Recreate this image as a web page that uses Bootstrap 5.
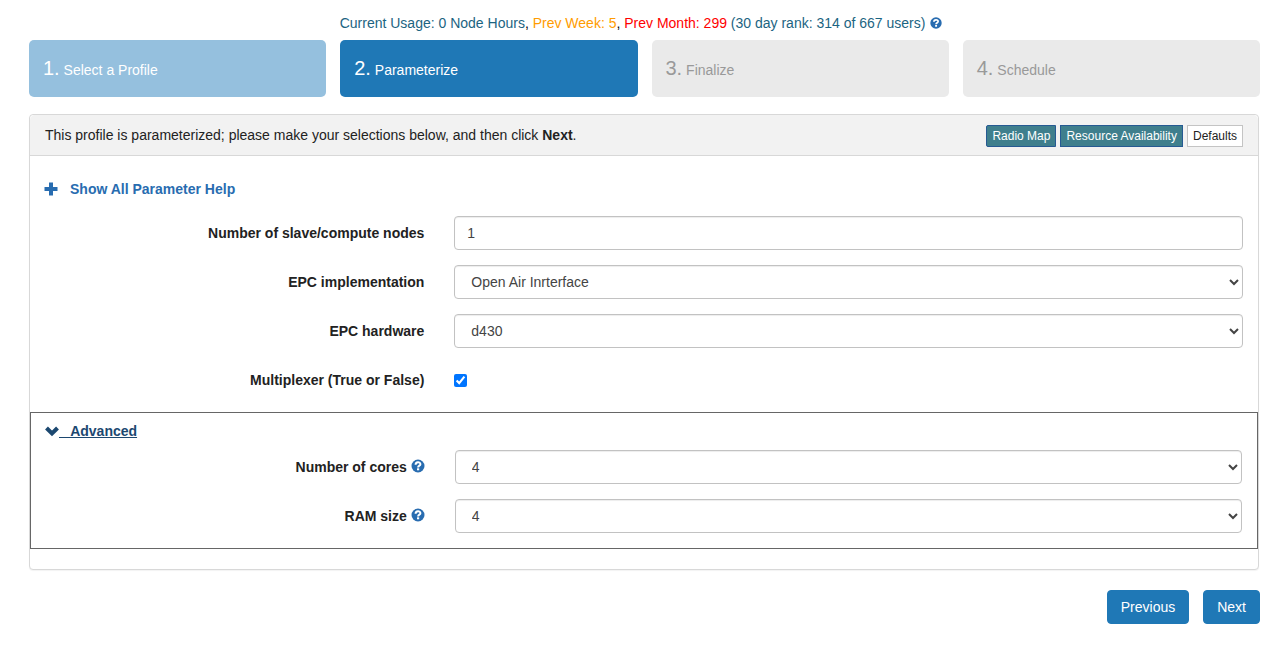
<!DOCTYPE html>
<html lang="en">
<head>
<meta charset="utf-8">
<meta name="viewport" content="width=device-width, initial-scale=1">
<title>Instantiate: Parameterize</title>
<link href="https://cdn.jsdelivr.net/npm/bootstrap@5.3.0/dist/css/bootstrap.min.css" rel="stylesheet">
<style>
  body {
    --bs-gutter-x: 30px;
    font-family: "Liberation Sans", Arial, sans-serif;
    font-size: 14px;
    line-height: 20px;
    color: #222;
    background: #fff;
  }
  a { color: #286cb0; text-decoration: none; }
  .page { padding: 13px 27px 24px 29px; }
  .usage { color: #1c6482; margin-bottom: 7px; padding-right: 6px; }
  .usage .week { color: #ff9c00; }
  .usage .month { color: #f00; }
  .glyph { width: 14px; height: 14px; fill: #286cb0; vertical-align: -2px; }
  .field label .glyph { vertical-align: -1px; }
  .hook { fill: none; stroke: #fff; stroke-width: 2; }
  .dot { fill: #fff; }

  .steps { gap: 14px; margin-bottom: 17px; }
  .step { padding: 15px 14px 12px; line-height: 30px; border-radius: 5px; background: #eaeaea; color: #999; }
  .step .num { font-size: 20px; line-height: 20px; }
  .step.done { background: #95c0de; color: #fff; }
  .step.current { background: #1f78b6; color: #fff; }

  .panel { margin: 0 1px 20px 0; border: 1px solid #d8d8d8; border-radius: 4px; box-shadow: 0 1px 1px rgba(0, 0, 0, .05); }
  .panel .card-header { padding: 10px 15px 8px; background: #f2f2f2; border-color: #d8d8d8; }
  .tools { gap: 4px; }
  .btn-tool { padding: 1px 5px; font-size: 12px; line-height: 18px; border-radius: 0; background: #fff; border-color: #c4c4c4; color: #222; }
  .btn-teal { background: #3f7f8d; border-color: #265a93; color: #fff; }
  .tools .btn-teal:first-child { border-radius: 2px 0 0 2px; }

  .help-link { margin: 23px 14px 17px; gap: 12px; }
  .field { --bs-gutter-x: 30px; margin: 0 0 15px; }
  .field label { line-height: 34px; }
  .form-control { height: 34px; padding: 6px 12px; font-size: 14px; line-height: 20px; color: #444; border-color: #c2c2c2; border-radius: 4px; box-shadow: inset 0 1px 1px rgba(0, 0, 0, .075); }
  select.form-control { appearance: auto; }
  .tick { width: 13px; height: 13px; margin: 0; accent-color: #0075ff; }

  .advanced { border: 1px solid #666; margin-bottom: 20px; padding-top: 8px; }
  .advanced-link { margin: 0 14px 9px; color: #1c4870; }
  .advanced-link .glyph { fill: none; stroke: #1c4870; stroke-width: 4; }
  .advanced-link .caption { text-decoration: underline; white-space: pre; }

  .actions { gap: 14px; }
  .btn-main { padding: 6px 13px; font-size: 14px; line-height: 20px; border-radius: 4px; background: #1f78b6; border-color: #1f78b6; color: #fff; }
</style>
</head>
<body>
<svg class="d-none" aria-hidden="true">
  <symbol id="question" viewBox="0 0 14 14">
    <circle cx="7" cy="7" r="6.5"/>
    <path class="hook" d="M4.600 5.700C4.600 2.600 9.400 2.600 9.400 5.200C9.400 6.800 7.100 6.500 7.100 8.500"/>
    <path class="dot" d="M6 9.300h2.200v2H6z"/>
  </symbol>
</svg>

<main class="page container-fluid">
  <div class="usage text-center">Current Usage: 0 Node Hours<span class="text-black">,</span> <span class="week">Prev Week: 5</span><span class="text-black">,</span> <span class="month">Prev Month: 299</span> (30 day rank: 314 of 667 users)
    <a href="#" aria-label="Usage help"><svg class="glyph" viewBox="-1 -1 16 16"><use href="#question" width="14" height="14"/></svg></a>
  </div>

  <div class="steps d-flex">
    <div class="step done flex-fill w-25"><span class="num">1.</span> Select a Profile</div>
    <div class="step current flex-fill w-25"><span class="num">2.</span> Parameterize</div>
    <div class="step flex-fill w-25"><span class="num">3.</span> Finalize</div>
    <div class="step flex-fill w-25"><span class="num">4.</span> Schedule</div>
  </div>

  <form>
    <section class="card panel">
      <div class="card-header d-flex justify-content-between">
        <span>This profile is parameterized; please make your selections below, and then click <b>Next</b>.</span>
        <div class="tools d-flex">
          <button type="button" class="btn btn-tool btn-teal">Radio Map</button>
          <button type="button" class="btn btn-tool btn-teal">Resource Availability</button>
          <button type="button" class="btn btn-tool">Defaults</button>
        </div>
      </div>

      <a href="#" class="help-link fw-bold d-flex align-items-center align-self-start">
        <svg class="glyph" viewBox="0 0 14 14"><path d="M5 .5h4V5h4.500v4H9v4.500H5V9H.5V5H5z"/></svg>
        <span>Show All Parameter Help</span>
      </a>

      <div class="row field">
        <label class="col-4 text-end fw-bold" for="nodes">Number of slave/compute nodes</label>
        <div class="col-8"><input id="nodes" type="text" class="form-control" value="1"></div>
      </div>
      <div class="row field">
        <label class="col-4 text-end fw-bold" for="epc">EPC implementation</label>
        <div class="col-8"><select id="epc" class="form-control"><option>Open Air Inrterface</option></select></div>
      </div>
      <div class="row field">
        <label class="col-4 text-end fw-bold" for="hardware">EPC hardware</label>
        <div class="col-8"><select id="hardware" class="form-control"><option>d430</option></select></div>
      </div>
      <div class="row field">
        <label class="col-4 text-end fw-bold" for="mux">Multiplexer (True or False)</label>
        <div class="col-8 d-flex align-items-center"><input id="mux" type="checkbox" class="tick" checked></div>
      </div>

      <div class="advanced">
        <a href="#" class="advanced-link fw-bold d-flex align-items-center">
          <svg class="glyph" viewBox="0 0 14 14"><path d="M1.500 4L7 9.500L12.500 4"/></svg>
          <span class="caption">&nbsp;&nbsp; Advanced</span>
        </a>
        <div class="row field">
          <label class="col-4 text-end fw-bold" for="cores">Number of cores <svg class="glyph"><use href="#question" width="14" height="14"/></svg></label>
          <div class="col-8"><select id="cores" class="form-control"><option>4</option></select></div>
        </div>
        <div class="row field">
          <label class="col-4 text-end fw-bold" for="ram">RAM size <svg class="glyph"><use href="#question" width="14" height="14"/></svg></label>
          <div class="col-8"><select id="ram" class="form-control"><option>4</option></select></div>
        </div>
      </div>
    </section>

    <div class="actions d-flex justify-content-end">
      <button type="button" class="btn btn-main">Previous</button>
      <button type="button" class="btn btn-main">Next</button>
    </div>
  </form>
</main>
<script src="https://cdn.jsdelivr.net/npm/bootstrap@5.3.0/dist/js/bootstrap.bundle.min.js"></script>
</body>
</html>
